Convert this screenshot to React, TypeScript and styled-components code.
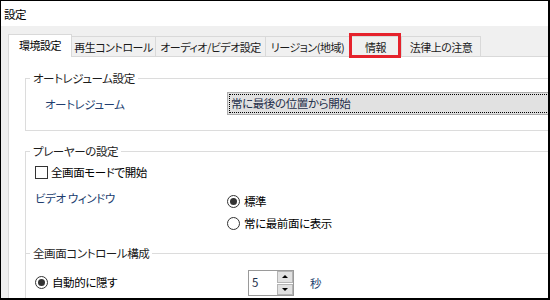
import React from 'react'
import styled, {createGlobalStyle} from 'styled-components'

const GlobalStyle = createGlobalStyle`
    html, body {
        margin: 0;
        padding: 0;
        background: #ffffff;
    }
    body {
        font-family: "Noto Sans CJK JP", "Noto Sans", sans-serif;
        font-size: 11.5px;
        letter-spacing: -0.4px;
        font-feature-settings: "palt";
        color: #000000;
    }
`

interface TabInfo {
    label: string;
    width: number; // width in px including borders
    active?: boolean;
    marked?: boolean; // red highlight box drawn over the tab
}

const tabs: TabInfo[] = [
    {label: '環境設定', width: 64, active: true},
    {label: '再生コントロール', width: 85},
    {label: 'オーディオ/ビデオ設定', width: 111},
    {label: 'リージョン(地域)', width: 85},
    {label: '情報', width: 53, marked: true},
    {label: '法律上の注意', width: 80},
]

const Radio = ({checked, label}: {checked?: boolean; label: string}) => (
    <RadioRow>
        <RadioCircle>{checked && <RadioDot />}</RadioCircle>
        <span>{label}</span>
    </RadioRow>
)

export default function App() {
    return (
        <>
            <GlobalStyle />
            <Window>
                <TitleBar>設定</TitleBar>
                <Body>
                    <TabStrip>
                        {tabs.map((tab) => (
                            <Tab key={tab.label} $active={tab.active} $marked={tab.marked} style={{width: tab.width}}>
                                {tab.label}
                            </Tab>
                        ))}
                    </TabStrip>
                    <Panel>
                        {/* auto resume */}
                        <Group>
                            <Legend>オートレジューム設定</Legend>
                            <GroupBody $pad="6px 0 15px 19px">
                                <FormRow>
                                    <FieldLabel $w={182}>オートレジューム</FieldLabel>
                                    <Combo>
                                        <FocusRect>常に最後の位置から開始</FocusRect>
                                    </Combo>
                                </FormRow>
                            </GroupBody>
                        </Group>

                        {/* player */}
                        <Group $open $gap={12}>
                            <Legend>プレーヤーの設定</Legend>
                            <GroupBody $pad="3px 0 19px 9px">
                                <CheckRow>
                                    <CheckBox />
                                    <span>全画面モードで開始</span>
                                </CheckRow>
                                <VideoRow>
                                    <FieldLabel $w={192}>ビデオ ウィンドウ</FieldLabel>
                                    <RadioColumn>
                                        <Radio checked label="標準" />
                                        <Radio label="常に最前面に表示" />
                                    </RadioColumn>
                                </VideoRow>
                            </GroupBody>
                        </Group>

                        {/* fullscreen controls */}
                        <Group $gap={-8}>
                            <Legend>全画面コントロール構成</Legend>
                            <GroupBody $pad="9px 0 20px 9px">
                                <FormRow>
                                    <RadioCell>
                                        <Radio checked label="自動的に隠す" />
                                    </RadioCell>
                                    <SpinBox>
                                        <SpinValue>5</SpinValue>
                                        <SpinButtons>
                                            <SpinButton><UpArrow /></SpinButton>
                                            <SpinButton><DownArrow /></SpinButton>
                                        </SpinButtons>
                                    </SpinBox>
                                    <Unit>秒</Unit>
                                </FormRow>
                            </GroupBody>
                        </Group>
                    </Panel>
                </Body>
            </Window>
        </>
    )
}

const Window = styled.div`
    width: 550px;
    height: 300px;
    box-sizing: border-box;
    border: 1px solid #000000;
    border-right-width: 2px;
    border-bottom-width: 2px;
    display: flex;
    flex-direction: column;
    overflow: hidden;
    background: #ffffff;
`

const TitleBar = styled.div`
    height: 25px;
    flex-shrink: 0;
    display: flex;
    align-items: center;
    padding-left: 3px;
    line-height: 16px;
    color: #000000;
`

const Body = styled.div`
    flex: 1;
    background: #f0f0f0;
    padding: 8px 0 0 7px;
    display: flex;
    flex-direction: column;
    overflow: hidden;
`

const TabStrip = styled.div`
    display: flex;
    align-items: flex-end;
    height: 22px;
    flex-shrink: 0;
    position: relative;
    z-index: 1;
`

const Tab = styled.div<{$active?: boolean; $marked?: boolean}>`
    box-sizing: border-box;
    height: ${(p) => (p.$active ? '23px' : '20px')};
    margin-bottom: ${(p) => (p.$active ? '-1px' : '0')};
    padding-bottom: ${(p) => (p.$active ? '3px' : '0')};
    background: ${(p) => (p.$active ? '#ffffff' : '#f0f0f0')};
    border: 1px solid #d9d9d9;
    border-bottom: none;
    display: flex;
    align-items: center;
    justify-content: center;
    white-space: nowrap;
    font-size: 11px;
    letter-spacing: -0.5px;
    line-height: 16px;
    color: ${(p) => (p.$active ? '#000000' : '#1a1a1a')};
    position: relative;
    z-index: ${(p) => (p.$active ? 2 : 1)};
    & + & {
        margin-left: -1px;
    }
    ${(p) => p.$marked && `
        &::after {
            content: '';
            position: absolute;
            left: -1px;
            right: 0;
            top: -4px;
            bottom: -2px;
            border: 3px solid #e5222c;
        }
    `}
`

const Panel = styled.div`
    flex: 1;
    width: 640px;
    background: #ffffff;
    border: 1px solid #d9d9d9;
    padding: 13px 0 0 16px;
    display: flex;
    flex-direction: column;
`

const Group = styled.fieldset<{$open?: boolean; $gap?: number}>`
    margin: ${(p) => p.$gap ?? 0}px 0 0 0;
    padding: 0;
    min-width: 0;
    border: 1px solid #dcdcdc;
    border-bottom: ${(p) => (p.$open ? 'none' : '1px solid #dcdcdc')};
`

const Legend = styled.legend`
    margin-left: 4px;
    padding: 0 3px;
    line-height: 16px;
    color: #1c1c1c;
`

const GroupBody = styled.div<{$pad: string}>`
    padding: ${(p) => p.$pad};
    display: flex;
    flex-direction: column;
`

const FormRow = styled.div`
    display: flex;
    align-items: center;
`

const FieldLabel = styled.div<{$w: number}>`
    width: ${(p) => p.$w}px;
    flex-shrink: 0;
    line-height: 16px;
    color: #213d6e;
`

const Combo = styled.div`
    width: 420px;
    height: 23px;
    box-sizing: border-box;
    background: #e1e1e1;
    border: 1px solid #adadad;
    padding: 1px;
    display: flex;
`

const FocusRect = styled.div`
    flex: 1;
    border: 1px dotted #000000;
    padding-left: 1px;
    line-height: 17px;
    color: #1f2f4a;
    white-space: nowrap;
`

const CheckRow = styled.div`
    display: flex;
    align-items: center;
    gap: 3px;
    height: 20px;
    line-height: 16px;
`

const CheckBox = styled.span`
    width: 13px;
    height: 13px;
    box-sizing: border-box;
    border: 1px solid #333333;
    background: #ffffff;
    flex-shrink: 0;
`

const VideoRow = styled.div`
    display: flex;
    align-items: flex-start;
    margin-top: 8px;
`

const RadioColumn = styled.div`
    display: flex;
    flex-direction: column;
`

const RadioRow = styled.div`
    display: flex;
    align-items: center;
    gap: 4px;
    height: 22px;
    line-height: 16px;
    white-space: nowrap;
`

const RadioCircle = styled.span`
    width: 13px;
    height: 13px;
    box-sizing: border-box;
    border: 1px solid #333333;
    border-radius: 50%;
    background: #ffffff;
    display: flex;
    align-items: center;
    justify-content: center;
    flex-shrink: 0;
`

const RadioDot = styled.span`
    width: 7px;
    height: 7px;
    border-radius: 50%;
    background: #333333;
`

const RadioCell = styled.div`
    width: 213px;
    flex-shrink: 0;
    margin-top: -2px;
`

const SpinBox = styled.div`
    width: 46px;
    height: 26px;
    box-sizing: border-box;
    border: 1px solid #9a9a9a;
    display: flex;
    flex-shrink: 0;
`

const SpinValue = styled.div`
    flex: 1;
    padding: 3px 0 0 3px;
    line-height: 16px;
    color: #1f2f4a;
`

const SpinButtons = styled.div`
    width: 16px;
    display: flex;
    flex-direction: column;
    gap: 1px;
    padding: 0;
`

const SpinButton = styled.div`
    flex: 1;
    box-sizing: border-box;
    background: #e1e1e1;
    border: 1px solid #b4b4b4;
    display: flex;
    align-items: center;
    justify-content: center;
`

const UpArrow = styled.span`
    width: 0;
    height: 0;
    border-left: 3px solid transparent;
    border-right: 3px solid transparent;
    border-bottom: 3px solid #000000;
`

const DownArrow = styled.span`
    width: 0;
    height: 0;
    border-left: 3px solid transparent;
    border-right: 3px solid transparent;
    border-top: 3px solid #000000;
`

const Unit = styled.span`
    margin-left: 16px;
    line-height: 16px;
    color: #213d6e;
`
